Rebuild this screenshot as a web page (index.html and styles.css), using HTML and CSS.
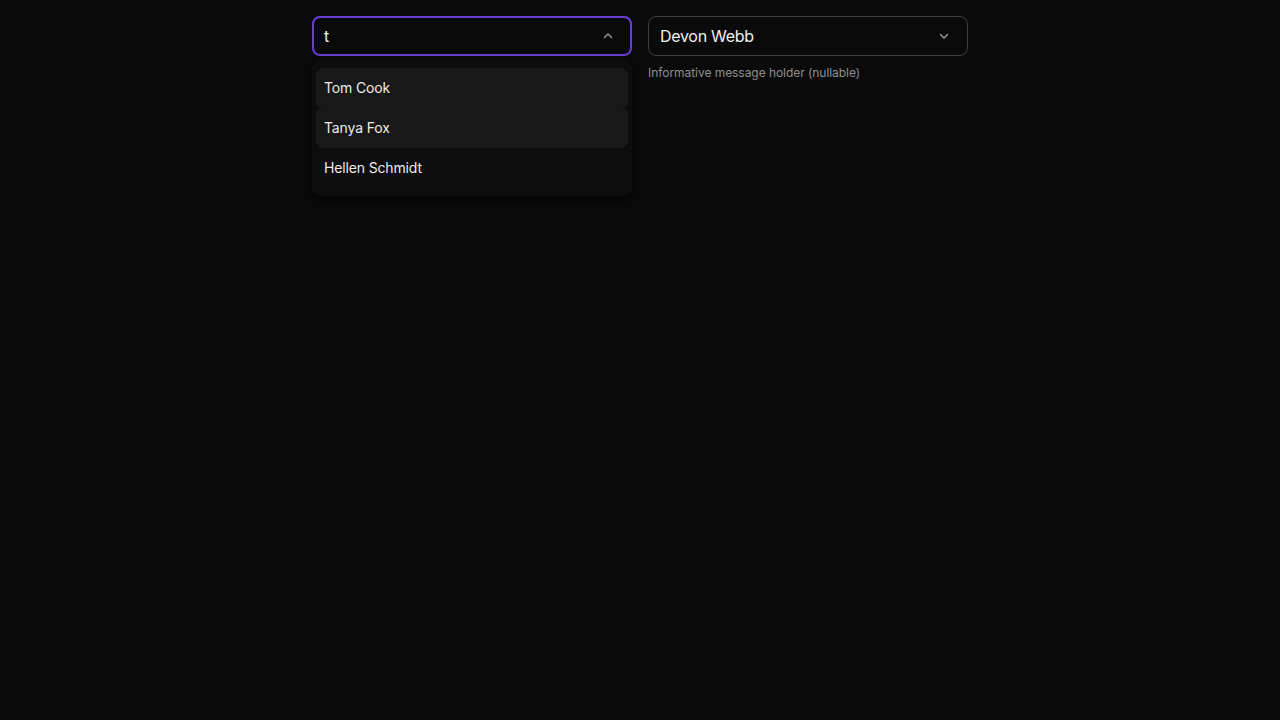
FILE: index.html
```html
<!DOCTYPE html>
<html>
<head>
<meta charset="utf-8">
<link rel="stylesheet" href="styles.css">
</head>
<body>
<div class="row">
  <div class="field">
    <div class="combo focused">
      <span class="value">t</span>
      <svg class="chev" width="16" height="16" viewBox="0 0 16 16"><path d="M4.5 9.5 8 6l3.5 3.5" fill="none" stroke="#a3a3a3" stroke-width="1.3" stroke-linecap="round" stroke-linejoin="round"/></svg>
    </div>
    <div class="menu">
      <div class="opt hl">Tom Cook</div>
      <div class="opt hl">Tanya Fox</div>
      <div class="opt">Hellen Schmidt</div>
    </div>
  </div>
  <div class="field">
    <div class="combo">
      <span class="value">Devon Webb</span>
      <svg class="chev" width="16" height="16" viewBox="0 0 16 16"><path d="M4.5 6.5 8 10l3.5-3.5" fill="none" stroke="#a3a3a3" stroke-width="1.3" stroke-linecap="round" stroke-linejoin="round"/></svg>
    </div>
    <div class="hint">Informative message holder (nullable)</div>
  </div>
</div>
</body>
</html>
```
FILE: styles.css
```css
html, body { margin: 0; padding: 0; background: #0a0a0a; height: 100%; }
body { font-family: Inter, "Noto Sans", sans-serif; color: #f5f5f5; }
.row { display: flex; justify-content: center; gap: 16px; padding-top: 16px; }
.field { width: 320px; position: relative; }
.combo {
  box-sizing: border-box; height: 40px; border: 1px solid #3f3f3f; border-radius: 8px;
  display: flex; align-items: center; justify-content: space-between;
  padding: 0 15px 0 11px; font-size: 16px; color: #f0f0f0; background: #0a0a0a;
  letter-spacing: -0.3px;
}
.combo.focused { border: 2px solid #6a3fd6; padding: 0 14px 0 10px; }
.value { line-height: 20px; }
.chev { display: block; }
.menu {
  position: absolute; left: 0; top: 44px; width: 320px; box-sizing: border-box;
  background: #0d0d0d; border-radius: 8px; padding: 8px 4px;
  box-shadow: 0 4px 12px rgba(0,0,0,0.6);
}
.opt { height: 40px; display: flex; align-items: center; padding: 0 8px 2px; box-sizing: border-box; font-size: 14px; color: #ececec; border-radius: 6px; letter-spacing: -0.15px; }
.opt.hl { background: #181818; }
.hint { margin-top: 9px; font-size: 12px; color: #8f8f8f; line-height: 16px; letter-spacing: -0.05px; }
```
